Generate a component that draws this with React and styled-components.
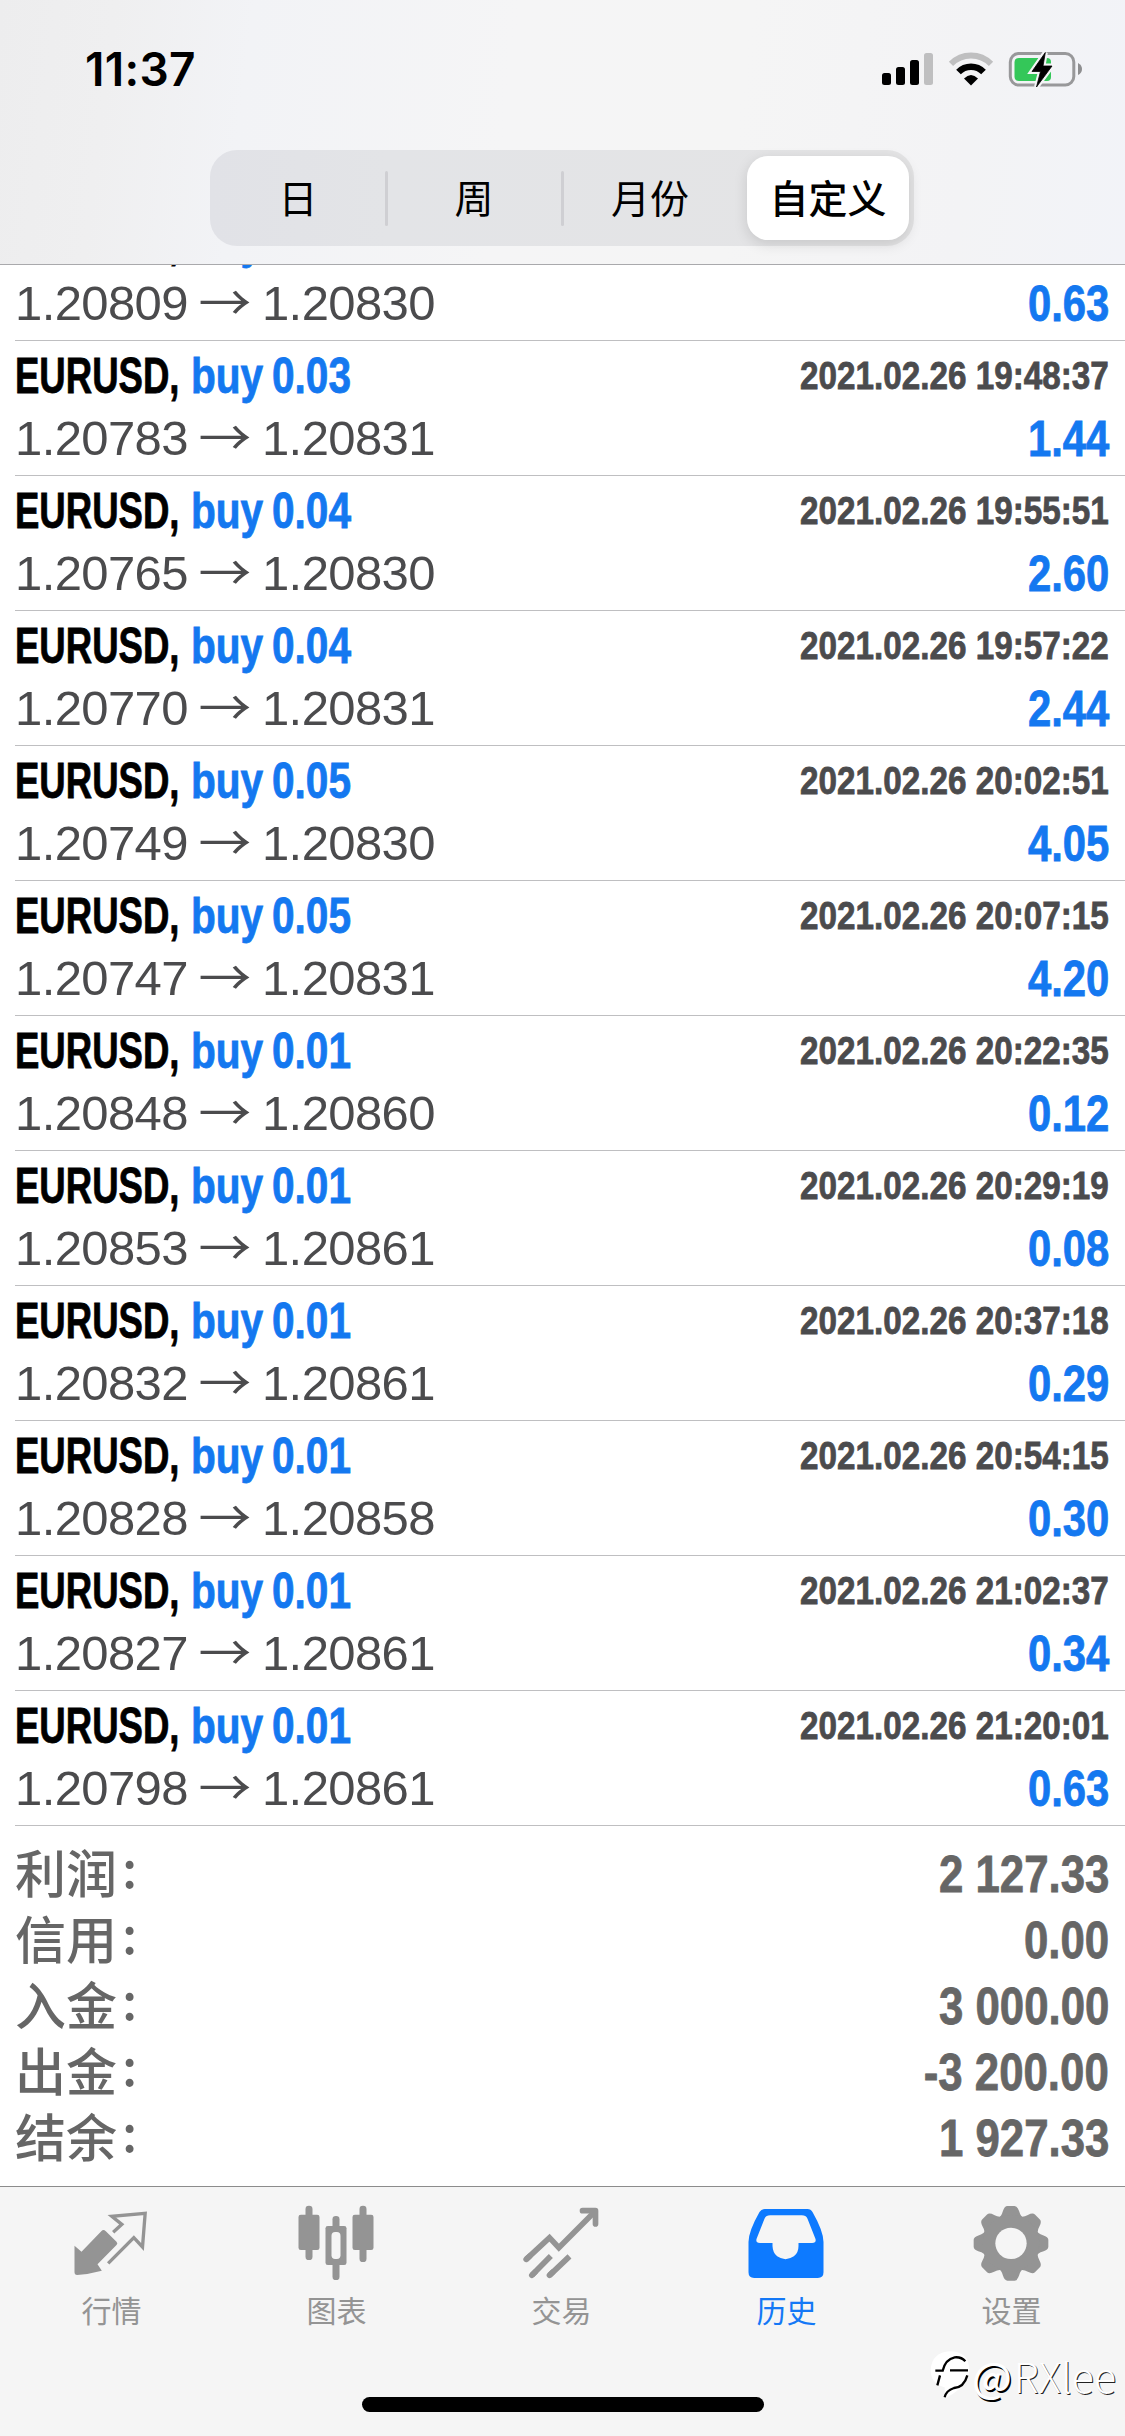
import React from "react";
import styled, { createGlobalStyle } from "styled-components";

const GlobalStyle = createGlobalStyle`
  * {
    box-sizing: border-box;
  }

  body {
    margin: 0;
    background: #fff;
    font-family: "Liberation Sans", "Noto Sans CJK SC", sans-serif;
  }
`;

// Styled Components
const Screen = styled.div`
  position: relative;
  display: flex;
  flex-direction: column;
  width: 1125px;
  height: 2436px;
  overflow: hidden;
  background: #fff;
`;

const Header = styled.header`
  flex: none;
  height: 265px;
  border-bottom: 1px solid #a9a9ac;
  background: linear-gradient(97deg, #ededee 0%, #efeff0 10%, #f2f3f6 22%, #f5f5f6 45%, #f5f5f5 65%, #f3f3f5 85%, #f2f3f8 100%);
`;

const StatusBar = styled.div`
  display: flex;
  justify-content: space-between;
  height: 150px;
  padding: 41px 43px 0 85px;
`;

const Time = styled.span`
  height: 56px;
  line-height: 56px;
  font-family: "Inter", sans-serif;
  font-size: 46px;
  font-weight: 600;
  letter-spacing: 0.3px;
  color: #000;
`;

const StatusIcons = styled.svg`
  width: 204px;
  height: 40px;
  margin-top: 9px;
`;

const Segments = styled.nav`
  display: flex;
  width: 704px;
  height: 96px;
  margin-left: 210px;
  padding: 6px 0;
  border-radius: 27px;
  background: linear-gradient(90deg, #e1e2e7 0%, #e3e4e7 25%, #e4e4e5 100%);
`;

const Segment = styled.button`
  display: flex;
  flex: none;
  align-items: center;
  justify-content: center;
  width: ${({ $active }) => ($active ? "162px" : "176px")};
  height: 84px;
  margin: ${({ $active }) => ($active ? "0 5px 0 9px" : "0")};
  padding: 0 0 4px;
  border: 0;
  border-radius: 21px;
  background: ${({ $active }) => ($active ? "#fff" : "transparent")};
  box-shadow: ${({ $active }) => ($active ? "0 4px 14px rgba(0, 0, 0, 0.13)" : "none")};
  font-family: "Noto Sans CJK SC", sans-serif;
  font-size: 39px;
  font-weight: ${({ $active }) => ($active ? 500 : 400)};
  color: #000;
`;

const SegmentDivider = styled.span`
  width: 3px;
  height: 55px;
  margin: 15px -1.5px 0;
  border-radius: 2px;
  background: #cfcfd3;
`;

const DealList = styled.ul`
  flex: none;
  display: flex;
  flex-direction: column;
  justify-content: flex-end;
  height: 1561px;
  margin: 0;
  padding: 0 0 0 15px;
  overflow: hidden;
  list-style: none;
`;

const Deal = styled.li`
  flex: none;
  height: 135px;
  padding: 3px 16px 0 0;
  border-bottom: 1px solid #bfbfc1;
`;

const Line = styled.div`
  display: flex;
  justify-content: space-between;
  height: 63px;
  line-height: 63px;
  white-space: pre;
`;

const Title = styled.div`
  display: flex;
`;

const Condensed = styled.span`
  display: inline-block;
  width: ${({ $width }) => $width || "auto"};
  font-size: ${({ $size }) => $size || 49.5}px;
  font-weight: 700;
  word-spacing: ${({ $wordSpacing }) => $wordSpacing || 0}px;
  transform: scaleX(${({ $scale }) => $scale});
  transform-origin: ${({ $from }) => $from || "left"} center;
  color: ${({ $color }) => $color};
  -webkit-text-stroke: 0.8px currentColor;
`;

const Prices = styled.span`
  font-size: 49px;
  letter-spacing: -0.6px;
  color: #4b4b4d;
`;

const Arrow = styled.span`
  display: inline-block;
  width: 48px;
  font-family: "Noto Sans CJK SC", sans-serif;
  font-size: 48px;
  letter-spacing: 0;
  line-height: 40px;
  transform: scaleX(1.1);
`;

const Totals = styled.section`
  flex: 1;
  padding: 15px 16px 0 15px;
`;

const TotalRow = styled.div`
  display: flex;
  justify-content: space-between;
  height: 66px;
  line-height: 66px;
`;

const TotalLabel = styled.span`
  height: 60px;
  font-family: "Noto Sans CJK SC", sans-serif;
  font-size: 51px;
  font-weight: 500;
  line-height: 60px;
  color: #666;
`;

const Colon = styled.span`
  margin-left: 5px;
  line-height: 0;
  vertical-align: 5px;
`;

const TabBar = styled.footer`
  flex: none;
  display: flex;
  flex-direction: column;
  align-items: center;
  height: 250px;
  border-top: 1px solid #8c8c8c;
  background: #f5f5f5;
`;

const Tabs = styled.nav`
  display: grid;
  grid-template-columns: repeat(5, 225px);
  height: 217px;
  margin-right: 2px;
`;

const Tab = styled.div`
  display: flex;
  flex-direction: column;
  align-items: center;
  padding-top: 15px;
  font-family: "Noto Sans CJK SC", sans-serif;
  font-size: 30px;
  line-height: 44px;
  color: ${({ $active }) => ($active ? "#1478f6" : "#949494")};
`;

const TabIcon = styled.svg`
  width: 80px;
  height: 80px;
  margin-bottom: 5px;
`;

const HomeIndicator = styled.div`
  width: 402px;
  height: 15px;
  margin-top: -7px;
  border-radius: 8px;
  background: #000;
`;

const Watermark = styled.div`
  position: absolute;
  right: 9px;
  bottom: 33px;
  display: flex;
  align-items: center;
  font-family: "Noto Sans CJK SC", sans-serif;
  font-size: 41px;
  font-weight: 300;
  line-height: 56px;
  color: #fff;
  text-shadow: 1px 1px 0 #222;
`;

const WatermarkLogo = styled.svg`
  width: 40px;
  height: 50px;
  margin-right: 2px;
`;

const At = styled.span`
  margin-right: 2px;
  font-weight: 500;
  text-shadow: 1.5px 1.5px 0 #000;
`;

const deals = [
  ["0.03", "2021.02.26 19:40:12", "1.20809", "1.20830", "0.63"],
  ["0.03", "2021.02.26 19:48:37", "1.20783", "1.20831", "1.44"],
  ["0.04", "2021.02.26 19:55:51", "1.20765", "1.20830", "2.60"],
  ["0.04", "2021.02.26 19:57:22", "1.20770", "1.20831", "2.44"],
  ["0.05", "2021.02.26 20:02:51", "1.20749", "1.20830", "4.05"],
  ["0.05", "2021.02.26 20:07:15", "1.20747", "1.20831", "4.20"],
  ["0.01", "2021.02.26 20:22:35", "1.20848", "1.20860", "0.12"],
  ["0.01", "2021.02.26 20:29:19", "1.20853", "1.20861", "0.08"],
  ["0.01", "2021.02.26 20:37:18", "1.20832", "1.20861", "0.29"],
  ["0.01", "2021.02.26 20:54:15", "1.20828", "1.20858", "0.30"],
  ["0.01", "2021.02.26 21:02:37", "1.20827", "1.20861", "0.34"],
  ["0.01", "2021.02.26 21:20:01", "1.20798", "1.20861", "0.63"],
];

const totals = [
  ["利润", "2 127.33"],
  ["信用", "0.00"],
  ["入金", "3 000.00"],
  ["出金", "-3 200.00"],
  ["结余", "1 927.33"],
];

const QuotesIcon = () => (
  <TabIcon viewBox="97.5 96 240 240" fill="currentColor">
    <path d="M105 227 L126 245 L186 183 Q192 177 199 184 L231 215 Q236 220 231 225 L174 283 L187 302 Q150 312 113 315 Q105 315 105 306Z" />
    <path d="M221 187 L247 163 L217 139 L317 130 L309 231 L283 203 L206 280" fill="none" stroke="currentColor" strokeWidth="10" />
  </TabIcon>
);

const ChartIcon = () => (
  <TabIcon viewBox="772.5 96 240 240" fill="currentColor">
    <rect x="798" y="107" width="21" height="163" rx="10" />
    <rect x="777" y="134" width="63" height="106" rx="7" />
    <rect x="960" y="107" width="21" height="169" rx="10" />
    <rect x="939" y="134" width="63" height="106" rx="7" />
    <rect x="879" y="138" width="21" height="192" rx="10" />
    <rect x="858" y="168" width="63" height="117" rx="7" />
    <rect x="876" y="186" width="27" height="81" rx="11" fill="#f5f5f5" />
  </TabIcon>
);

const TradeIcon = () => (
  <TabIcon viewBox="127.5 96 240 240" fill="none" stroke="currentColor" strokeWidth="17">
    <path d="M140 268 L210 203 L238 233 L347 124" strokeLinejoin="miter" />
    <path d="M309 122 H348 V162" strokeLinecap="round" strokeLinejoin="round" />
    <path d="M140 268 L150 259 M157 316 L167 306 M210 316 L220 306" strokeLinecap="round" />
    <path d="M157 316 L214 258 M210 316 L270 259" />
  </TabIcon>
);

const HistoryIcon = () => (
  <TabIcon viewBox="802.5 96 240 240">
    <path
      fill="#0d7aff"
      fillRule="evenodd"
      d="M856 117 H984 Q994 117 999 126 Q1032 184 1032 216 V307 Q1032 324 1015 324 H824 Q807 324 807 307 V216 Q807 184 840 126 Q846 117 856 117Z M872 136 Q860 136 855 146 L831 207 Q828 219 841 219 H879 V228 Q880 249 893 259 Q918 276 943 259 Q957 249 957 228 V219 H998 Q1011 219 1008 207 L984 146 Q979 136 967 136Z"
    />
  </TabIcon>
);

const SettingsIcon = () => (
  <TabIcon viewBox="277.5 96 240 240">
    <g fill="currentColor">
      {[0, 45, 90, 135, 180, 225, 270, 315].map((angle) => (
        <path
          key={angle}
          transform={`rotate(${angle} 394.5 220)`}
          d="M354 145 Q366 140 370 124 Q375 108 384 108 H405 Q414 108 419 124 Q423 140 435 145 L410 200 H379Z"
        />
      ))}
      <circle cx="394.5" cy="220" r="85" />
    </g>
    <circle cx="394.5" cy="220" r="47" fill="#f5f5f5" />
  </TabIcon>
);

const tabs = [
  { label: "行情", Icon: QuotesIcon },
  { label: "图表", Icon: ChartIcon },
  { label: "交易", Icon: TradeIcon },
  { label: "历史", Icon: HistoryIcon, active: true },
  { label: "设置", Icon: SettingsIcon },
];

const bolt = "M1045.300 52.500 L1032 71.500 H1040.500 L1036.500 87 L1052 66 H1043Z";

const SignalWifiBattery = () => (
  <StatusIcons viewBox="878 50 204 40">
    {/* Signal */}
    <rect x="882" y="73" width="9" height="12" rx="2.5" />
    <rect x="896" y="67" width="9" height="18" rx="2.5" />
    <rect x="910" y="60" width="9" height="25" rx="2.5" />
    <rect x="924" y="53" width="9" height="32" rx="2.5" fill="#bfbfc0" />
    {/* Wifi */}
    <path d="M951 63.800 A28 28 0 0 1 991 63.800" fill="none" stroke="#bfbfc0" strokeWidth="6" />
    <path d="M958.500 72 A17.500 17.500 0 0 1 983.500 72" fill="none" stroke="#000" strokeWidth="6.500" />
    <path d="M964 78.500 Q971 71.500 978 78.500 L971 85.500Z" />
    {/* Battery */}
    <rect x="1010.300" y="53.500" width="63.500" height="31.500" rx="8.500" fill="none" stroke="#98989a" strokeWidth="3" />
    <path d="M1078 63 Q1082 65 1082 69 Q1082 73 1078 75Z" fill="#8e8e90" />
    <path d="M1019 58 H1047 Q1051 58 1051 62 V77 Q1051 81 1047 81 H1019 Q1014.500 81 1014.500 76.500 V62.500 Q1014.500 58 1019 58Z" fill="#34c759" />
    <path d={bolt} stroke="#f5f5f7" strokeWidth="5" />
    <path d={bolt} stroke="#000" strokeWidth="0.8" />
  </StatusIcons>
);

const DealRow = ({ deal }) => {
  const [volume, time, open, close, profit] = deal;

  return (
    <Deal>
      <Line>
        <Title>
          <Condensed $width="176px" $scale={0.738} $color="#000">EURUSD,</Condensed>
          <Condensed $scale={0.82} $wordSpacing={-3} $color="#1478f0">buy {volume}</Condensed>
        </Title>
        <Condensed $size={39.5} $scale={0.842} $from="right" $color="#4b4b4d">{time}</Condensed>
      </Line>
      <Line>
        <Prices>
          {open} <Arrow>→</Arrow> {close}
        </Prices>
        <Condensed $scale={0.845} $from="right" $color="#1478f0">{profit}</Condensed>
      </Line>
    </Deal>
  );
};

const App = () => {
  return (
    <>
      <GlobalStyle />
      <Screen>
        <Header>
          <StatusBar>
            <Time>11:37</Time>
            <SignalWifiBattery />
          </StatusBar>
          <Segments>
            <Segment>日</Segment>
            <SegmentDivider />
            <Segment>周</Segment>
            <SegmentDivider />
            <Segment>月份</Segment>
            <Segment $active>自定义</Segment>
          </Segments>
        </Header>

        <DealList>
          {deals.map((deal) => (
            <DealRow key={deal[1]} deal={deal} />
          ))}
        </DealList>

        <Totals>
          {totals.map(([label, value]) => (
            <TotalRow key={label}>
              <TotalLabel>
                {label}
                <Colon>:</Colon>
              </TotalLabel>
              <Condensed $size={52} $scale={0.842} $from="right" $color="#666">{value}</Condensed>
            </TotalRow>
          ))}
        </Totals>

        <TabBar>
          <Tabs>
            {tabs.map(({ label, Icon, active }) => (
              <Tab key={label} $active={active}>
                <Icon />
                {label}
              </Tab>
            ))}
          </Tabs>
          <HomeIndicator />
        </TabBar>

        <Watermark>
          <WatermarkLogo viewBox="24 20 120 150">
            <path d="M84 24 Q140 24 142 80 Q140 126 76 162 Q68 166 68 152 V132 Q26 122 26 80 Q30 26 84 24Z" fill="#fff" />
            <path
              d="M40 82 H62 Q70 48 98 42 Q118 40 130 54 M84 81 H138 M54 96 L46 126 M136 96 Q126 132 96 134 Q72 142 68 162"
              fill="none"
              stroke="#000"
              strokeWidth="7"
            />
          </WatermarkLogo>
          <At>@</At>RXlee
        </Watermark>
      </Screen>
    </>
  );
};

export default App;
